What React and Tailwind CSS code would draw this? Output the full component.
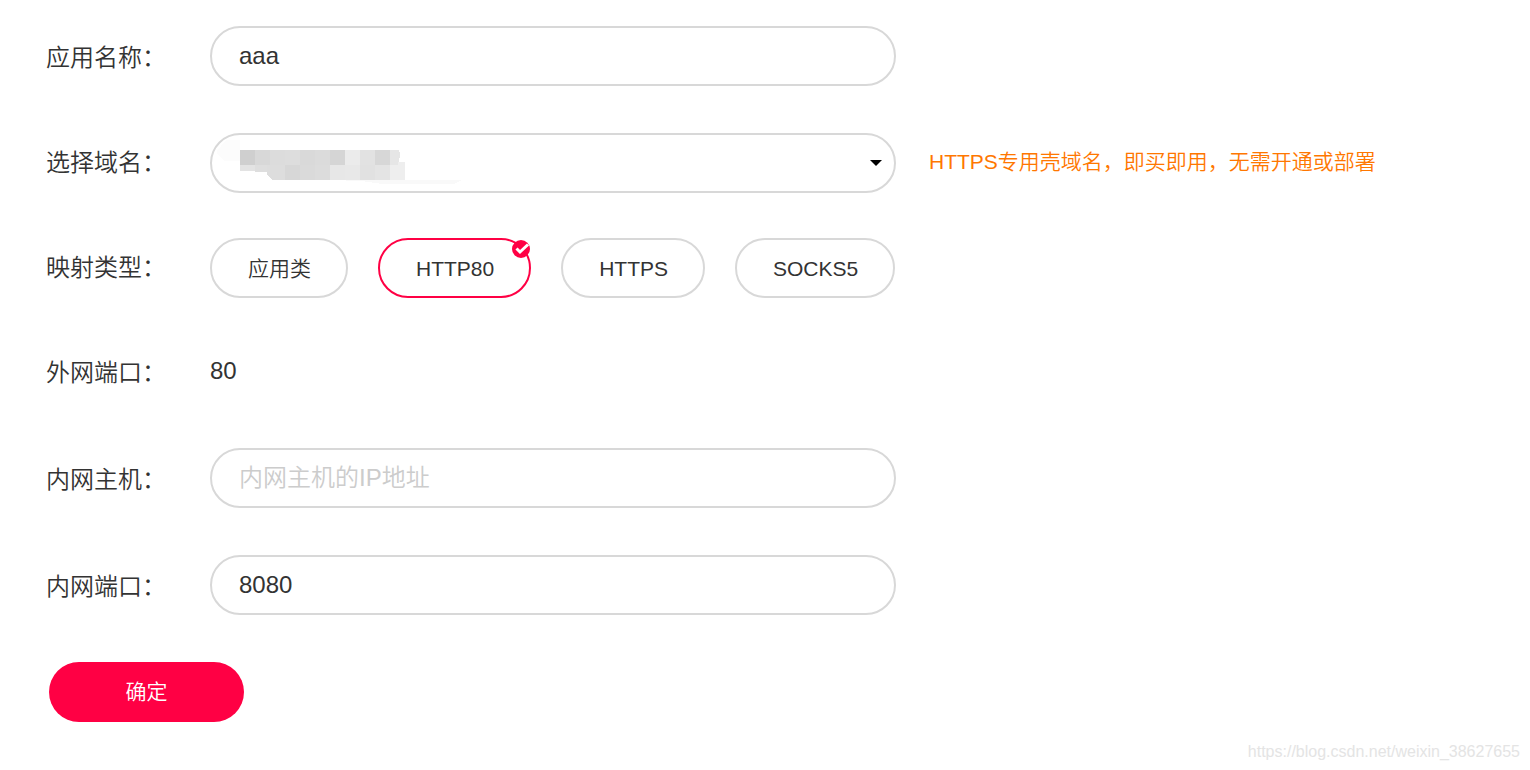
import { useState } from "react";

const mappingTypes = [
  { value: "app", label: "应用类" },
  { value: "http80", label: "HTTP80" },
  { value: "https", label: "HTTPS" },
  { value: "socks5", label: "SOCKS5" },
];

const maskBlocks = [
  [30, 15, 15, "#cfcfcf"],
  [45, 15, 15, "#d8d8d8"],
  [60, 15, 15, "#dcdcdc"],
  [75, 15, 15, "#dddddd"],
  [90, 15, 15, "#d9d9d9"],
  [105, 15, 15, "#dbdbdb"],
  [120, 15, 15, "#d5d5d5"],
  [135, 15, 15, "#ebebeb"],
  [150, 15, 15, "#e2e2e2"],
  [165, 15, 15, "#d7d7d7"],
  [30, 30, 6, "#e3e3e3"],
  [45, 30, 7, "#dedede"],
  [75, 30, 15, "#d7d7d7"],
  [90, 30, 15, "#dadada"],
  [105, 30, 15, "#dcdcdc"],
  [120, 30, 15, "#e7e7e7"],
  [135, 30, 15, "#e8e8e8"],
  [150, 30, 15, "#e1e1e1"],
  [165, 30, 15, "#e4e4e4"],
  [180, 30, 15, "#eeeeee"],
];

const labelClass = "w-[164px] shrink-0 text-2xl leading-8";
const fieldClass =
  "h-[60px] w-full rounded-full border-2 border-[#d8d8d8] bg-white px-[27px] text-2xl text-[#333333] outline-none placeholder:text-[#cccccc]";

function TextRow({ id, label, value, onChange, placeholder }) {
  return (
    <div className="mb-[47px] flex items-center">
      <label htmlFor={id} className={`${labelClass} pt-1`}>
        {label}
      </label>
      <div className="w-full max-w-[686px]">
        <input
          id={id}
          type="text"
          value={value}
          placeholder={placeholder}
          onChange={(e) => onChange(e.target.value)}
          className={fieldClass}
        />
      </div>
    </div>
  );
}

function DomainMask() {
  return (
    <svg
      className="pointer-events-none absolute top-0.5 left-0 h-14 w-[260px]"
      viewBox="0 0 260 56"
      shapeRendering="crispEdges"
      aria-hidden="true"
    >
      <path d="M16 5h14v21H15l-8-7V16z" fill="#fcfcfc" />
      <path d="M120 45h132l-8 4h-72l-20-3z" fill="#f9f9f9" />
      {maskBlocks.map(([x, y, h, color]) => (
        <rect key={`${x}-${y}`} x={x} y={y} width="15" height={h} fill={color} />
      ))}
      <path d="M180 15h9l1 4-1 8v3h-9z" fill="#e6e6e6" />
      <path d="M188 27h7v3h-7z" fill="#eeeeee" />
      <path d="M57 30h18v15H62l-5-6z" fill="#dddddd" />
    </svg>
  );
}

function CheckBadge() {
  return (
    <svg className="absolute top-0 -right-px size-[18px]" viewBox="0 0 18 18" aria-hidden="true">
      <circle cx="9" cy="9" r="9" fill="#ff0044" />
      <path d="M14 0h4v5z" fill="#ffffff" />
      <path d="M4.5 8.5l3.5 3.5L16 4.5" fill="none" stroke="#ffffff" strokeWidth="3" />
    </svg>
  );
}

export default function App() {
  const [name, setName] = useState("aaa");
  const [type, setType] = useState("http80");
  const [host, setHost] = useState("");
  const [port, setPort] = useState("8080");

  return (
    <main
      lang="zh-CN"
      className="bg-white font-['Liberation_Sans','Noto_Sans_CJK_SC',sans-serif] font-[350] text-[#333333]"
    >
      <form className="pt-[26px] pr-6 pl-[46px]" onSubmit={(e) => e.preventDefault()}>
        <TextRow id="name" label="应用名称：" value={name} onChange={setName} />

        <div className="mb-[45px] flex items-center">
          <label htmlFor="domain" className={labelClass}>
            选择域名：
          </label>
          <div className="relative w-full max-w-[686px]">
            <select id="domain" className={`${fieldClass} block appearance-none`}>
              <option value=""></option>
            </select>
            <DomainMask />
            <svg
              className="pointer-events-none absolute top-[27px] right-3.5 h-1.5 w-3"
              viewBox="0 0 12 6"
              aria-hidden="true"
            >
              <path d="M0 0h12L6 6z" fill="#000000" />
            </svg>
          </div>
          <p className="ml-[33px] shrink-0 pb-0.5 text-[21px] leading-8 text-[#ff7700]">
            HTTPS专用壳域名，即买即用，无需开通或部署
          </p>
        </div>

        <div className="mb-[45px] flex items-center">
          <span id="type-label" className={labelClass}>
            映射类型：
          </span>
          <div role="radiogroup" aria-labelledby="type-label" className="flex gap-[30px]">
            {mappingTypes.map((item) => (
              <label
                key={item.value}
                className={`relative flex h-[60px] cursor-pointer items-center rounded-full border-2 pt-0.5 pr-[35px] pl-9 text-[21px] leading-8 ${
                  type === item.value ? "border-[#ff0044]" : "border-[#d8d8d8]"
                }`}
              >
                <input
                  type="radio"
                  name="type"
                  value={item.value}
                  checked={type === item.value}
                  onChange={() => setType(item.value)}
                  className="sr-only"
                />
                {item.label}
                {type === item.value && <CheckBadge />}
              </label>
            ))}
          </div>
        </div>

        <div className="mb-[45px] flex h-[60px] items-center">
          <span className={labelClass}>外网端口：</span>
          <span className="pb-1 text-2xl leading-8">80</span>
        </div>

        <TextRow
          id="host"
          label="内网主机："
          value={host}
          onChange={setHost}
          placeholder="内网主机的IP地址"
        />
        <TextRow id="port" label="内网端口：" value={port} onChange={setPort} />

        <button
          type="submit"
          className="ml-[3px] h-[60px] w-[195px] cursor-pointer rounded-full bg-[#ff0044] text-[21px] text-white"
        >
          确定
        </button>
      </form>

      <footer className="mt-[18px] pr-2.5 text-right text-base leading-6 text-[#e4e4e4]">
        https://blog.csdn.net/weixin_38627655
      </footer>
    </main>
  );
}
